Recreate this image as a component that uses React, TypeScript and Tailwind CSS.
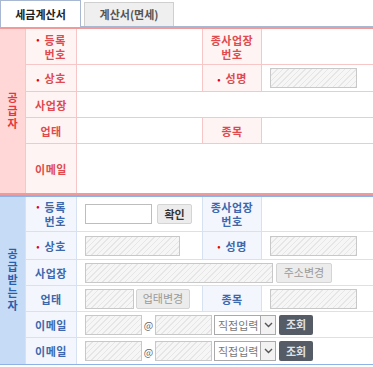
import React from 'react'

const FONT = { fontFamily: '"Noto Sans CJK KR", "Noto Sans", sans-serif' }

const hatch =
  'border border-[#c8c8c8] bg-[repeating-linear-gradient(135deg,#e6e6e6_0px,#e6e6e6_1px,#f6f6f6_1px,#f6f6f6_4px)]'

type Tone = 'red' | 'blue'

const tones = {
  red: {
    side: 'bg-[#ffd7d7] text-[#e8363c]',
    label: 'bg-[#fff4f4] text-[#e04a4e]',
    line: 'border-[#f7c6c6]',
    outer: 'border-[#f19a9a]',
  },
  blue: {
    side: 'bg-[#c6dbf5] text-[#2a5fae]',
    label: 'bg-[#f3f7fd] text-[#3d68ad]',
    line: 'border-[#d6e2f2]',
    outer: 'border-[#8db3e6]',
  },
}

function Star() {
  return <span className="mr-[5px] self-start mt-[-1px] text-[10px] leading-[14px] text-[#e60012]">•</span>
}

function Label({ tone, star, text, w }: { tone: Tone; star?: boolean; text: string; w: string }) {
  const two = text.includes('\n')
  return (
    <div className={`${w} shrink-0 flex items-center justify-center border-r ${tones[tone].line} ${tones[tone].label}`}>
      <div className="flex items-center">
        {star && (two ? <Star /> : <span className="mr-[5px] text-[10px] text-[#e60012]">•</span>)}
        <span className="whitespace-pre-line text-center text-[11px] font-bold leading-[14px] tracking-[0.5px]">
          {text}
        </span>
      </div>
    </div>
  )
}

function Row({ tone, h, children, last }: { tone: Tone; h: string; children: React.ReactNode; last?: boolean }) {
  return <div className={`flex ${h} ${last ? '' : `border-b ${tones[tone].line}`}`}>{children}</div>
}

function Value({ w, children, tone }: { w?: string; children?: React.ReactNode; tone: Tone }) {
  return (
    <div className={`${w ?? 'flex-1'} flex items-center pl-[8px] ${w ? `border-r ${tones[tone].line}` : ''}`}>
      {children}
    </div>
  )
}

function Btn({ children, dark, muted, w }: { children: string; dark?: boolean; muted?: boolean; w: string }) {
  if (dark)
    return (
      <button className={`${w} h-[20px] rounded-[2px] bg-[#555c65] text-[11px] font-bold text-[#dfe3e8]`}>
        {children}
      </button>
    )
  return (
    <button
      className={`${w} h-[20px] rounded-[2px] border border-[#d4d4d4] bg-[#ececec] text-[11px] ${
        muted ? 'text-[#9a9a9a]' : 'font-bold text-[#333]'
      }`}
    >
      {children}
    </button>
  )
}

function Side({ tone, text }: { tone: Tone; text: string }) {
  return (
    <div
      className={`w-[26px] shrink-0 flex items-center justify-center border-r ${tones[tone].line} ${tones[tone].side}`}
    >
      <span className="text-[11px] font-bold leading-[14px] tracking-[2px] [writing-mode:vertical-rl] [text-orientation:upright]">
        {text}
      </span>
    </div>
  )
}

function Email({ last }: { last?: boolean }) {
  return (
    <Row tone="blue" h="h-[26px]" last={last}>
      <Label tone="blue" w="w-[51px]" text="이메일" />
      <Value tone="blue">
        <div className={`w-[57px] h-[20px] ${hatch}`} />
        <span className="w-[13px] text-center text-[10px] text-[#666]">@</span>
        <div className={`w-[57px] h-[20px] ${hatch}`} />
        <div className="ml-[2px] flex h-[20px] w-[62px] border border-[#a9a9a9] bg-white">
          <span className="flex-1 pl-[3px] text-[11px] leading-[18px] text-[#777]">직접입력</span>
          <span className="flex w-[15px] items-center justify-center border-l border-[#a9a9a9] bg-[#f2f2f2]">
            <svg width="9" height="6" viewBox="0 0 9 6">
              <path d="M1 1l3.5 3.5L8 1" fill="none" stroke="#555" strokeWidth="1.4" />
            </svg>
          </span>
        </div>
        <span className="w-[3px]" />
        <Btn dark w="w-[34px]">조회</Btn>
      </Value>
    </Row>
  )
}

export default function App() {
  return (
    <div className="w-[373px] h-[367px] bg-white overflow-hidden" style={FONT}>
      {/* tabs */}
      <div className="flex h-[27px] items-end">
        <div className="flex h-[27px] w-[81px] items-center justify-center border border-b-0 border-[#a9b8d2] bg-white text-[11px] font-bold text-[#222]">
          세금계산서
        </div>
        <div className="flex-1 h-[27px] flex items-end border-b border-[#a9b8d2]">
          <div className="ml-[3px] flex h-[24px] w-[90px] items-center justify-center border border-b-0 border-[#cfcfcf] bg-[#efefef] text-[11px] font-bold text-[#555]">
            계산서(면세)
          </div>
        </div>
      </div>

      {/* 공급자 */}
      <div className={`flex border-t-2 border-b-2 ${tones.red.outer}`}>
        <Side tone="red" text="공급자" />
        <div className="flex-1 flex flex-col">
          <Row tone="red" h="h-[36px]">
            <Label tone="red" star w="w-[51px]" text={'등록\n번호'} />
            <Value tone="red" w="w-[126px]" />
            <Label tone="red" w="w-[59px]" text={'종사업장\n번호'} />
            <Value tone="red" />
          </Row>
          <Row tone="red" h="h-[27px]">
            <Label tone="red" star w="w-[51px]" text="상호" />
            <Value tone="red" w="w-[126px]" />
            <Label tone="red" star w="w-[59px]" text="성명" />
            <Value tone="red">
              <div className={`w-[87px] h-[20px] ${hatch}`} />
            </Value>
          </Row>
          <Row tone="red" h="h-[26px]">
            <Label tone="red" w="w-[51px]" text="사업장" />
            <Value tone="red" />
          </Row>
          <Row tone="red" h="h-[26px]">
            <Label tone="red" w="w-[51px]" text="업태" />
            <Value tone="red" w="w-[126px]" />
            <Label tone="red" w="w-[59px]" text="종목" />
            <Value tone="red" />
          </Row>
          <Row tone="red" h="h-[49px]" last>
            <Label tone="red" w="w-[51px]" text="이메일" />
            <Value tone="red" />
          </Row>
        </div>
      </div>

      {/* 공급받는자 */}
      <div className={`flex border-t-2 border-b ${tones.blue.outer}`}>
        <Side tone="blue" text="공급받는자" />
        <div className="flex-1 flex flex-col">
          <Row tone="blue" h="h-[35px]">
            <Label tone="blue" star w="w-[51px]" text={'등록\n번호'} />
            <Value tone="blue" w="w-[126px]">
              <div className="h-[20px] w-[67px] border border-[#bdbdbd] bg-white" />
              <span className="w-[5px]" />
              <Btn w="w-[35px]">확인</Btn>
            </Value>
            <Label tone="blue" w="w-[59px]" text={'종사업장\n번호'} />
            <Value tone="blue" />
          </Row>
          <Row tone="blue" h="h-[28px]">
            <Label tone="blue" star w="w-[51px]" text="상호" />
            <Value tone="blue" w="w-[126px]">
              <div className={`w-[95px] h-[20px] ${hatch}`} />
            </Value>
            <Label tone="blue" star w="w-[59px]" text="성명" />
            <Value tone="blue">
              <div className={`w-[87px] h-[20px] ${hatch}`} />
            </Value>
          </Row>
          <Row tone="blue" h="h-[26px]">
            <Label tone="blue" w="w-[51px]" text="사업장" />
            <Value tone="blue">
              <div className={`w-[188px] h-[20px] ${hatch}`} />
              <span className="w-[3px]" />
              <Btn muted w="w-[56px]">주소변경</Btn>
            </Value>
          </Row>
          <Row tone="blue" h="h-[26px]">
            <Label tone="blue" w="w-[51px]" text="업태" />
            <Value tone="blue" w="w-[126px]">
              <div className={`w-[49px] h-[20px] ${hatch}`} />
              <span className="w-[2px]" />
              <Btn muted w="w-[54px]">업태변경</Btn>
            </Value>
            <Label tone="blue" w="w-[59px]" text="종목" />
            <Value tone="blue">
              <div className={`w-[87px] h-[20px] ${hatch}`} />
            </Value>
          </Row>
          <Email />
          <Email last />
        </div>
      </div>
    </div>
  )
}
